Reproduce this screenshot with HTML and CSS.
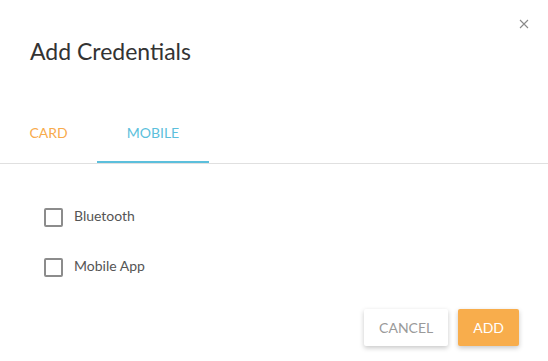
FILE: index.html
```html
<!DOCTYPE html>
<html lang="en">
<head>
    <meta charset="UTF-8">
    <meta name="viewport" content="width=device-width, initial-scale=1.0">
    <title>Add Credentials</title>
    <link rel="stylesheet" href="styles.css">
</head>
<body>
    <div class="dialog">
        <button class="close-btn" aria-label="Close">
            <svg width="10" height="10" viewBox="0 0 10 10">
                <path d="M1 1L9 9M9 1L1 9" stroke="#8a8a8a" stroke-width="1.1" fill="none"/>
            </svg>
        </button>
        <h2 class="dialog-title">Add Credentials</h2>
        <div class="tabs">
            <div class="tab tab-card">CARD</div>
            <div class="tab tab-active">MOBILE</div>
        </div>
        <div class="dialog-body">
            <label class="check-row">
                <span class="check-box"></span>
                <span class="check-label">Bluetooth</span>
            </label>
            <label class="check-row">
                <span class="check-box"></span>
                <span class="check-label">Mobile App</span>
            </label>
        </div>
        <div class="dialog-actions">
            <button class="btn btn-cancel">CANCEL</button>
            <button class="btn btn-add">ADD</button>
        </div>
    </div>
</body>
</html>
```

FILE: styles.css
```css
body {
    margin: 0;
    padding: 0;
    background: #fff;
    font-family: Lato, "Noto Sans", sans-serif;
}

.dialog {
    position: relative;
    width: 548px;
    height: 361px;
    display: flex;
    flex-direction: column;
    box-sizing: border-box;
}

.close-btn {
    position: absolute;
    top: 19px;
    right: 19px;
    width: 10px;
    height: 10px;
    padding: 0;
    border: none;
    background: none;
    display: flex;
    cursor: pointer;
}

.dialog-title {
    margin: 0;
    padding: 36px 30px 0 30px;
    font-size: 23px;
    font-weight: 400;
    line-height: 30px;
    color: #333;
}

.tabs {
    display: flex;
    margin-top: 49px;
    border-bottom: 1px solid #e0e0e0;
}

.tab {
    padding: 0 29.5px;
    height: 48px;
    line-height: 36px;
    font-size: 14px;
    box-sizing: border-box;
    border-bottom: 2px solid transparent;
}

.tab-card {
    color: #f8ab4c;
}

.tab-active {
    color: #5bbfdc;
    border-bottom-color: #5bbfdc;
}

.dialog-body {
    padding: 44px 44px 0 44px;
    display: flex;
    flex-direction: column;
    gap: 31px;
}

.check-row {
    display: flex;
    align-items: center;
    gap: 11px;
    height: 19px;
}

.check-box {
    width: 19px;
    height: 19px;
    box-sizing: border-box;
    border: 2px solid #8c8c8c;
    border-radius: 2px;
}

.check-label {
    font-size: 14px;
    color: #555;
    margin-top: -4px;
}

.dialog-actions {
    margin-top: auto;
    padding: 0 29px 15px 0;
    display: flex;
    justify-content: flex-end;
    gap: 10px;
}

.btn {
    height: 37px;
    padding: 0 15px;
    border: none;
    border-radius: 2px;
    font-family: Lato, "Noto Sans", sans-serif;
    font-size: 14px;
    cursor: pointer;
    box-shadow: 0 2px 5px rgba(0,0,0,0.22);
}

.btn-cancel {
    background: #fff;
    color: #9a9a9a;
}

.btn-add {
    background: #f8ad4c;
    color: #fff;
}
```
